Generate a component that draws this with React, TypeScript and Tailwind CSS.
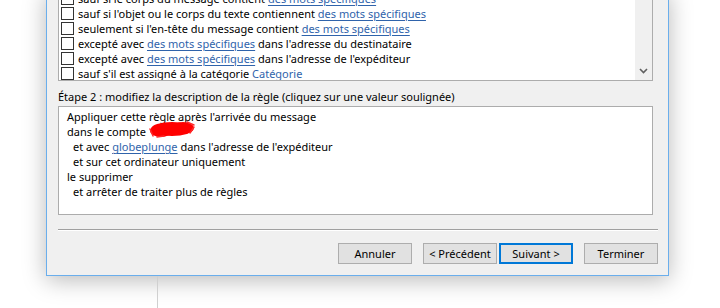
import React from 'react';

type Part = { text: string; link?: boolean };

const conditions: Part[][] = [
  [{ text: 'sauf si le corps du message contient ' }, { text: 'des mots spécifiques', link: true }],
  [{ text: "sauf si l'objet ou le corps du texte contiennent " }, { text: 'des mots spécifiques', link: true }],
  [{ text: "seulement si l'en-tête du message contient " }, { text: 'des mots spécifiques', link: true }],
  [
    { text: 'excepté avec ' },
    { text: 'des mots spécifiques', link: true },
    { text: " dans l'adresse du destinataire" },
  ],
  [
    { text: 'excepté avec ' },
    { text: 'des mots spécifiques', link: true },
    { text: " dans l'adresse de l'expéditeur" },
  ],
  [{ text: "sauf s'il est assigné à la catégorie " }, { text: 'Catégorie', link: true }],
];

function Link({ children }: { children: React.ReactNode }) {
  return <span className="text-[#2f63ab] underline underline-offset-2 decoration-1">{children}</span>;
}

// red scribble that hides the account name
function Scribble() {
  return (
    <svg width="48" height="17" viewBox="0 0 48 17" className="absolute left-[-1px] top-[-3px]">
      <g fill="#ff0000">
        <ellipse cx="24" cy="8" rx="21" ry="7" />
        <ellipse cx="13" cy="10" rx="11" ry="6" />
        <ellipse cx="35" cy="7" rx="11" ry="6" />
      </g>
      <g stroke="#ff2a2a" strokeWidth="1.5" strokeLinecap="round" fill="none">
        <path d="M2 8 L5 15 M9 16 L16 15 M39 1 L46 4 M46 6 L42 12" />
      </g>
    </svg>
  );
}

function Button({ label, focused }: { label: string; focused?: boolean }) {
  return (
    <button
      className={
        focused
          ? 'w-[74px] h-[21px] bg-[#e1e1e1] border-2 border-[#0078d7] text-[11px] text-black leading-none'
          : 'w-[74px] h-[21px] bg-[#e1e1e1] border border-[#adadad] text-[11px] text-black leading-none'
      }
    >
      {label}
    </button>
  );
}

export default function App() {
  return (
    <div
      className="w-[720px] h-[308px] overflow-hidden bg-white text-[11px] text-black"
      style={{ fontFamily: '"Noto Sans", sans-serif' }}
    >
      <div className="-mt-[10px] ml-[46px] w-[623px] bg-[#f0f0f0] border-x border-b border-[#6aaeec] shadow-[0_4px_22px_rgba(0,0,0,0.28)] pl-[11px] pr-[10px] pb-[11px]">
        {/* conditions list */}
        <div className="w-[595px] h-[91px] border border-[#acacac] bg-white flex overflow-hidden">
          <div className="flex-1 flex flex-col">
            {conditions.map((row, i) => (
              <div key={i} className="h-[15px] shrink-0 flex items-center pl-[2px] gap-[4px] whitespace-nowrap">
                <span className="w-[13px] h-[13px] border border-[#333333] bg-white shrink-0" />
                <span className="leading-[14px]">
                  {row.map((p, j) => (p.link ? <Link key={j}>{p.text}</Link> : <span key={j}>{p.text}</span>))}
                </span>
              </div>
            ))}
          </div>
          <div className="w-[17px] bg-[#f0f0f0] flex items-end justify-center pb-[6px]">
            <svg width="9" height="6" viewBox="0 0 9 6">
              <path d="M1 1 L4.5 4.5 L8 1" stroke="#606060" strokeWidth="1.6" fill="none" />
            </svg>
          </div>
        </div>

        <div className="mt-[8px] h-[15px] leading-[15px] whitespace-nowrap">
          Étape 2 : modifiez la description de la règle (cliquez sur une valeur soulignée)
        </div>

        {/* rule description */}
        <div className="mt-[2px] w-[595px] h-[109px] border border-[#acacac] bg-white pt-[2px] pl-[8px] leading-[15px] whitespace-nowrap">
          <div>Appliquer cette règle après l'arrivée du message</div>
          <div>
            dans le compte{' '}
            <span className="relative inline-block w-[46px] h-[15px] align-top">
              <Scribble />
            </span>
          </div>
          <div className="pl-[6px]">
            et avec <Link>globeplunge</Link> dans l'adresse de l'expéditeur
          </div>
          <div className="pl-[6px]">et sur cet ordinateur uniquement</div>
          <div>le supprimer</div>
          <div className="pl-[6px]">et arrêter de traiter plus de règles</div>
        </div>

        <div className="mt-[14px] w-[600px] border-t border-[#a0a0a0] border-b border-b-white" />

        <div className="mt-[12px] w-[600px] flex justify-end">
          <Button label="Annuler" />
          <div className="w-[11px]" />
          <Button label="< Précédent" />
          <div className="w-[2px]" />
          <Button label="Suivant >" focused />
          <div className="w-[11px]" />
          <Button label="Terminer" />
        </div>
      </div>
      <div className="ml-[157px] w-px h-[40px] bg-[#d0d0d0]" />
    </div>
  );
}
